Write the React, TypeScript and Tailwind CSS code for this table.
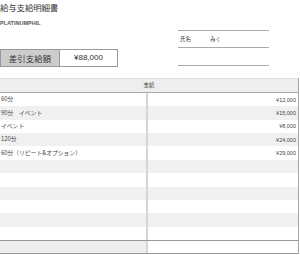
import React from "react";

const JP = { fontFamily: '"Noto Sans CJK JP", "Noto Sans", sans-serif' };

const items: [string, string][] = [
  ["60分", "¥12,000"],
  ["90分　イベント", "¥15,000"],
  ["イベント", "¥8,000"],
  ["120分", "¥24,000"],
  ["60分（リピート&オプション）", "¥29,000"],
];

export default function App() {
  const rows = Array.from({ length: 11 }, (_, i) => items[i] ?? ["", ""]);
  return (
    <div className="w-[300px] h-[255px] bg-white overflow-hidden text-[#333]" style={JP}>
      <div className="flex h-[78px]">
        <div className="w-[178px] flex flex-col">
          <div className="text-[8.5px] leading-[12px] pt-[1px] tracking-[-0.2px]">給与支給明細書</div>
          <div className="mt-[7px] text-[5.5px] leading-[6px] font-bold text-[#555] font-['Liberation_Sans']">PLATINUMPHIL</div>
          <div className="mt-[23px] flex h-[18px] w-[118px]">
            <div className="w-[60px] bg-[#cccccc] border border-[#999] flex items-center justify-center text-[8.3px] tracking-[0.2px]">差引支給額</div>
            <div className="flex-1 border border-l-0 border-[#999] flex items-center justify-center text-[8px] font-['Liberation_Sans']">¥88,000</div>
          </div>
        </div>
        <div className="w-[91px] mt-[30px] flex flex-col">
          <div className="h-[18px] border-t border-b border-[#aaa] flex items-center text-[5.5px] pl-[2px]">
            <span className="w-[30px]">氏名</span>
            <span>みく</span>
          </div>
          <div className="h-[18px] border-b border-[#aaa]"></div>
        </div>
      </div>
      <div className="w-[299px] border-r border-[#aaa]">
        <div className="h-[15px] border-t border-[#ddd] border-b border-b-[#aaa] bg-[#eeeeee] flex items-center justify-center text-[5.5px]">支給</div>
        <div className="flex flex-col h-[147px]">
          {rows.map(([name, amt], i) => (
            <div key={i} className={`flex-1 flex ${i % 2 === 1 ? "bg-[#f0f0f0]" : "bg-white"}`}>
              <div className="w-[148px] border-r-2 border-[#d6d6d6] flex items-center pl-[1px] text-[5.8px] text-[#444]">{name}</div>
              <div className="flex-1 flex items-center justify-end pr-[2px] text-[5.5px] text-[#444] font-['Liberation_Sans']">{amt}</div>
            </div>
          ))}
        </div>
        <div className="flex h-[14px] border-t border-b border-[#999]">
          <div className="w-[148px] bg-[#eeeeee] border-r-2 border-[#d6d6d6]"></div>
          <div className="flex-1 bg-white"></div>
        </div>
      </div>
    </div>
  );
}
